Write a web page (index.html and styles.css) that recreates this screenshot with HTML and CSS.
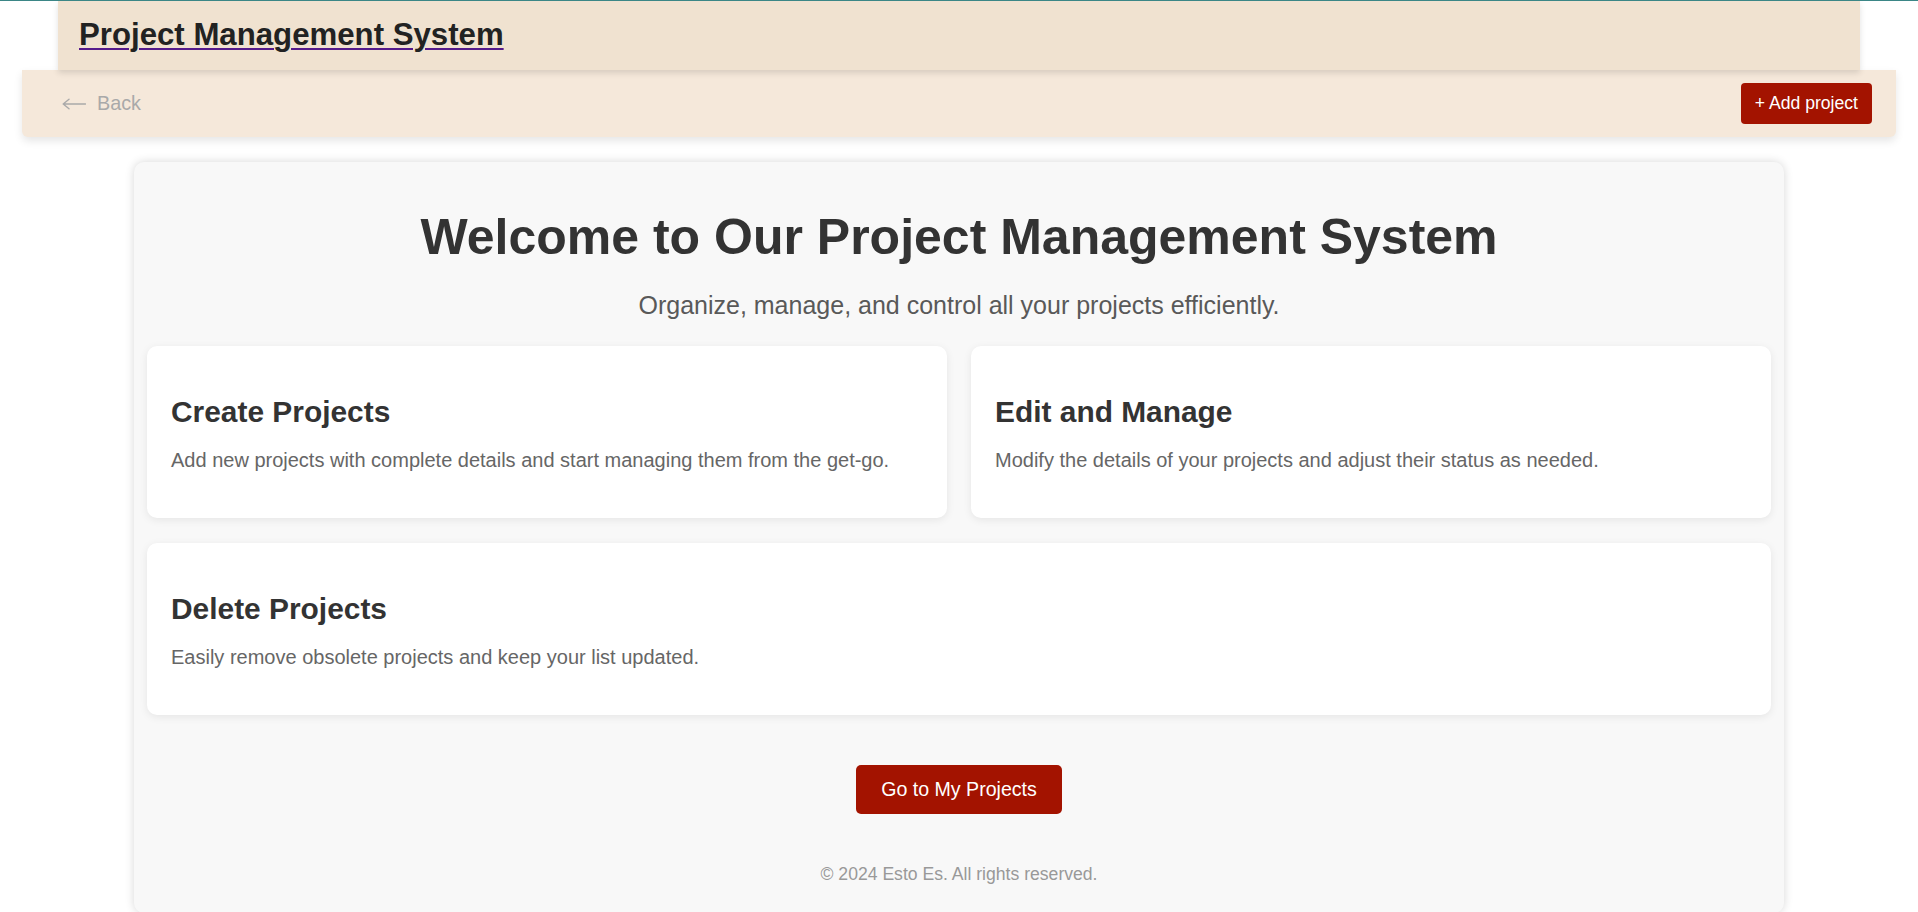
FILE: index.html
```html
<!DOCTYPE html>
<html lang="en">
<head>
<meta charset="utf-8">
<title>Project Management System</title>
<link rel="stylesheet" href="styles.css">
</head>
<body>
  <header class="site-header">
    <a class="brand-link" href="#"><h1 class="brand">Project Management System</h1></a>
  </header>
  <nav class="toolbar">
    <a class="back-link" href="#">
      <svg class="back-arrow" width="24" height="12" viewBox="0 0 24 12" aria-hidden="true">
        <path d="M23.5 6H1.2M7 1.2L1.2 6L7 10.8" fill="none" stroke="#a9a9a9" stroke-width="1.4" stroke-linecap="round" stroke-linejoin="round"/>
      </svg>
      <span>Back</span>
    </a>
    <a class="add-btn" href="#">+ Add project</a>
  </nav>
  <main class="panel">
    <h2 class="welcome">Welcome to Our Project Management System</h2>
    <p class="lead">Organize, manage, and control all your projects efficiently.</p>
    <section class="features">
      <div class="card">
        <h3 class="card-title">Create Projects</h3>
        <p class="card-text">Add new projects with complete details and start managing them from the get-go.</p>
      </div>
      <div class="card">
        <h3 class="card-title">Edit and Manage</h3>
        <p class="card-text">Modify the details of your projects and adjust their status as needed.</p>
      </div>
      <div class="card card-wide">
        <h3 class="card-title">Delete Projects</h3>
        <p class="card-text">Easily remove obsolete projects and keep your list updated.</p>
      </div>
    </section>
    <div class="cta-row">
      <a class="cta-btn" href="#">Go to My Projects</a>
    </div>
    <footer class="foot">© 2024 Esto Es. All rights reserved.</footer>
  </main>
</body>
</html>
```
FILE: styles.css
```css
* { box-sizing: border-box; }

html, body { margin: 0; padding: 0; }

body {
  font-family: "Liberation Sans", Arial, sans-serif;
  background: #ffffff;
  border-top: 1px solid #3b8686;
  color: #333;
}

.site-header {
  margin: 0 58px;
  height: 69px;
  padding: 16px 21px 0;
  background: #f0e2d0;
  box-shadow: 0 3px 6px rgba(0, 0, 0, 0.12);
  position: relative;
  z-index: 2;
}

.brand-link {
  color: #551a8b;
  text-decoration: underline;
  text-decoration-color: #551a8b;
  text-decoration-thickness: 2px;
  text-underline-offset: 3px;
  display: inline-block;
}

.brand {
  margin: 0;
  font-size: 31.2px;
  font-weight: bold;
  color: #222;
  line-height: normal;
}

.toolbar {
  margin: 0 22px;
  height: 67px;
  padding: 0 24px 0 40px;
  background: #f5e8da;
  border-radius: 0 0 6px 6px;
  box-shadow: 0 4px 8px rgba(0, 0, 0, 0.10);
  display: flex;
  align-items: center;
  justify-content: space-between;
  position: relative;
  z-index: 1;
}

.back-link {
  display: flex;
  align-items: center;
  color: #a9a9a9;
  text-decoration: none;
  font-size: 19.8px;
}

.back-arrow {
  margin-right: 11px;
  margin-top: 1px;
}

.add-btn {
  display: inline-flex;
  align-items: center;
  height: 41px;
  padding: 0 14px;
  background: #a31300;
  color: #fff;
  text-decoration: none;
  font-size: 17.6px;
  border-radius: 4px;
}

.panel {
  width: 1650px;
  margin: 25px auto 0;
  padding: 46px 13px 28px;
  background: #f8f8f8;
  border-radius: 10px;
  box-shadow: 0 0 10px rgba(0, 0, 0, 0.16);
  text-align: center;
}

.welcome {
  margin: 0;
  font-size: 50px;
  font-weight: bold;
  color: #333;
  line-height: normal;
}

.lead {
  margin: 25px 0 0;
  font-size: 25px;
  color: #595959;
  line-height: normal;
}

.features {
  margin-top: 26px;
  display: grid;
  grid-template-columns: 1fr 1fr;
  gap: 25px 24px;
  text-align: left;
}

.card {
  background: #ffffff;
  border-radius: 10px;
  padding: 49px 24px 0;
  height: 172px;
  box-shadow: 0 2px 8px rgba(0, 0, 0, 0.08);
}

.card-wide { grid-column: 1 / span 2; }

.card-title {
  margin: 0 0 20px;
  font-size: 29.9px;
  font-weight: bold;
  color: #333;
  line-height: normal;
}

.card-text {
  margin: 0;
  font-size: 20px;
  color: #666;
  line-height: normal;
}

.cta-row {
  margin-top: 50px;
  display: flex;
  justify-content: center;
}

.cta-btn {
  display: inline-block;
  padding: 13px 25px;
  background: #a31300;
  color: #fff;
  text-decoration: none;
  font-size: 19.6px;
  line-height: normal;
  border-radius: 5px;
}

.foot {
  margin-top: 50px;
  font-size: 17.6px;
  color: #999;
  line-height: normal;
}
```
